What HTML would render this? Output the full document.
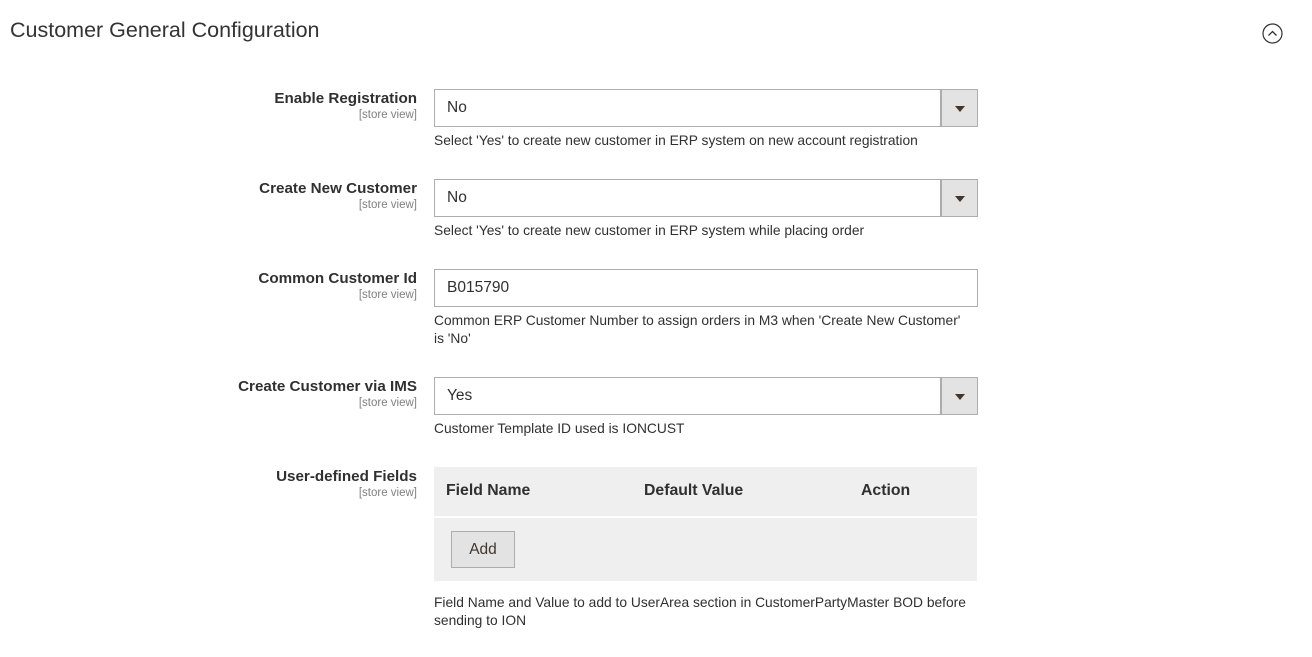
<!DOCTYPE html>
<html><head><style>
body{margin:0;width:1312px;height:657px;background:#fff;font-family:"Liberation Sans",sans-serif;color:#303030;position:relative;overflow:hidden}
.a{position:absolute}
.t{left:10px;top:18px;font-size:21.5px;color:#333}
.lbl{right:895px;text-align:right;font-size:15.2px;font-weight:bold;color:#303030;line-height:18px}
.lbl small{display:block;font-size:11.5px;font-weight:normal;color:#808080;line-height:14px}
.in{left:434px;width:542px;height:36px;border:1px solid #adadad;font-size:15.5px;line-height:36px;box-sizing:content-box}
.in span{padding-left:12px}
.dd{position:absolute;right:0;top:0;width:35px;height:36px;background:#e3e3e3;border-left:2px solid #adadad}
.dd:after{content:"";position:absolute;left:13px;top:16px;border-left:5px solid transparent;border-right:5px solid transparent;border-top:6px solid #41362f}
.n{left:434px;width:560px;font-size:13.8px;line-height:18px;color:#303030}
</style></head><body>
<div class="a t">Customer General Configuration</div>
<svg class="a" style="left:1262px;top:23px" width="21" height="21"><circle cx="10.5" cy="10.5" r="9.5" fill="none" stroke="#303030" stroke-width="1.2"/><path d="M6.5 12.5L10.5 8.5L14.5 12.5" fill="none" stroke="#303030" stroke-width="1.3"/></svg>

<div class="a lbl" style="top:90px">Enable Registration<small>[store view]</small></div>
<div class="a in" style="top:89px"><span>No</span><div class="dd"></div></div>
<div class="a n" style="top:132px">Select 'Yes' to create new customer in ERP system on new account registration</div>

<div class="a lbl" style="top:180px">Create New Customer<small>[store view]</small></div>
<div class="a in" style="top:179px"><span>No</span><div class="dd"></div></div>
<div class="a n" style="top:222px">Select 'Yes' to create new customer in ERP system while placing order</div>

<div class="a lbl" style="top:270px">Common Customer Id<small>[store view]</small></div>
<div class="a in" style="top:269px"><span>B015790</span></div>
<div class="a n" style="top:312px">Common ERP Customer Number to assign orders in M3 when 'Create New Customer'<br>is 'No'</div>

<div class="a lbl" style="top:378px">Create Customer via IMS<small>[store view]</small></div>
<div class="a in" style="top:377px"><span>Yes</span><div class="dd"></div></div>
<div class="a n" style="top:420px">Customer Template ID used is IONCUST</div>

<div class="a lbl" style="top:468px">User-defined Fields<small>[store view]</small></div>
<div class="a" style="left:434px;top:467px;width:543px;height:49px;background:#efefef;font-size:15.8px;font-weight:bold;color:#303030">
<span class="a" style="left:12px;top:15px">Field Name</span><span class="a" style="left:210px;top:15px">Default Value</span><span class="a" style="left:427px;top:15px">Action</span></div>
<div class="a" style="left:434px;top:518px;width:543px;height:63px;background:#efefef"></div>
<div class="a" style="left:451px;top:531px;width:62px;height:35px;border:1px solid #adadad;background:#e3e3e3;font-size:15.5px;line-height:35px;text-align:center;color:#41362f">Add</div>
<div class="a n" style="top:594px;width:560px">Field Name and Value to add to UserArea section in CustomerPartyMaster BOD before<br>sending to ION</div>
</body></html>
